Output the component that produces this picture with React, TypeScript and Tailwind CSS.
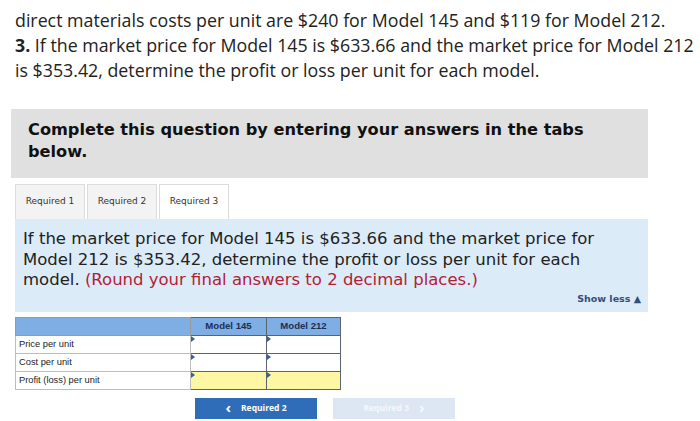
import React from 'react';

const verdana = { fontFamily: '"DejaVu Sans", Verdana, sans-serif' };

const Cell = ({ yellow }: { yellow?: boolean }) => (
    <td className={`relative border border-[#5a6470] p-0 h-[18px] ${yellow ? 'bg-[#fdf6a3]' : 'bg-white'}`}>
        <span className="absolute left-0 top-0 w-0 h-0 border-t-[3px] border-b-[3px] border-l-[4px] border-t-transparent border-b-transparent border-l-[#3a5f9c]" />
    </td>
);

const App = () => {
    return (
        <div className="w-[700px] h-[421px] bg-white overflow-hidden relative">
            <div className="pl-[15px] pt-[8px] text-[17.8px] leading-[25px] text-[#222] whitespace-nowrap" style={{ fontFamily: '"Open Sans", sans-serif' }}>
                <div>direct materials costs per unit are $240 for Model 145 and $119 for Model 212.</div>
                <div><b>3.</b> If the market price for Model 145 is $633.66 and the market price for Model 212</div>
                <div>is $353.42, determine the profit or loss per unit for each model.</div>
            </div>

            <div className="ml-[11px] mt-[26px] w-[637px] h-[69px] bg-[#e0e0e0] pl-[17px] pt-[10px] text-[16.2px] leading-[22px] font-bold text-[#111] whitespace-nowrap" style={verdana}>
                Complete this question by entering your answers in the tabs<br />below.
            </div>

            <div className="ml-[15px] mt-[6px] w-[633px]">
                <div className="flex gap-[2px] h-[35px] items-end" style={verdana}>
                    {['Required 1', 'Required 2', 'Required 3'].map((t, i) => (
                        <div
                            key={t}
                            className={`h-[35px] w-[70px] flex items-center justify-center text-[9px] text-[#333] border border-[#dcdcdc] border-b-0 ${i === 2 ? 'bg-white' : 'bg-[#f3f3f3]'}`}
                        >
                            {t}
                        </div>
                    ))}
                </div>
                <div className="bg-[#dcebf8] h-[93px] pl-[8px] pt-[10px] relative" style={verdana}>
                    <div className="text-[16.5px] leading-[20.5px] text-[#222] whitespace-nowrap">
                        If the market price for Model 145 is $633.66 and the market price for<br />
                        Model 212 is $353.42, determine the profit or loss per unit for each<br />
                        model. <span className="text-[#b32036]">(Round your final answers to 2 decimal places.)</span>
                    </div>
                    <div className="absolute right-[7px] bottom-[6px] text-[9.5px] font-bold text-[#334e7a]">Show less ▲</div>
                </div>

                <table className="mt-[5px] border-collapse text-[9.3px] text-[#222]" style={{ fontFamily: '"Liberation Sans", Arial, sans-serif' }}>
                    <thead>
                        <tr className="bg-[#7eaee4] h-[18px]">
                            <th className="w-[175px] border border-[#9a9a9a]"></th>
                            <th className="w-[76px] border border-[#5a6470] font-bold text-[#1c2e52] text-[9.6px]">Model 145</th>
                            <th className="w-[74px] border border-[#5a6470] font-bold text-[#1c2e52] text-[9.6px]">Model 212</th>
                        </tr>
                    </thead>
                    <tbody>
                        {['Price per unit', 'Cost per unit', 'Profit (loss) per unit'].map((label, i) => (
                            <tr key={label}>
                                <td className="border border-[#bdbdbd] pl-[3px] h-[18px] font-normal">{label}</td>
                                <Cell yellow={i === 2} />
                                <Cell yellow={i === 2} />
                            </tr>
                        ))}
                    </tbody>
                </table>

                <div className="flex gap-[16px] ml-[180px] mt-[8px]" style={{ fontFamily: '"Open Sans", sans-serif' }}>
                    <button className="w-[122px] h-[21px] bg-[#2f6db8] text-white text-[8.5px] font-bold flex items-center justify-center gap-[10px]">
                        <span className="text-[15px] leading-none -mt-[3px]">‹</span> Required 2
                    </button>
                    <button className="w-[122px] h-[21px] bg-[#dde7f3] text-[#f4f7fb] text-[8.5px] font-bold flex items-center justify-center gap-[10px]">
                        Required 3 <span className="text-[15px] leading-none -mt-[3px]">›</span>
                    </button>
                </div>
            </div>
        </div>
    );
};

export default App;
